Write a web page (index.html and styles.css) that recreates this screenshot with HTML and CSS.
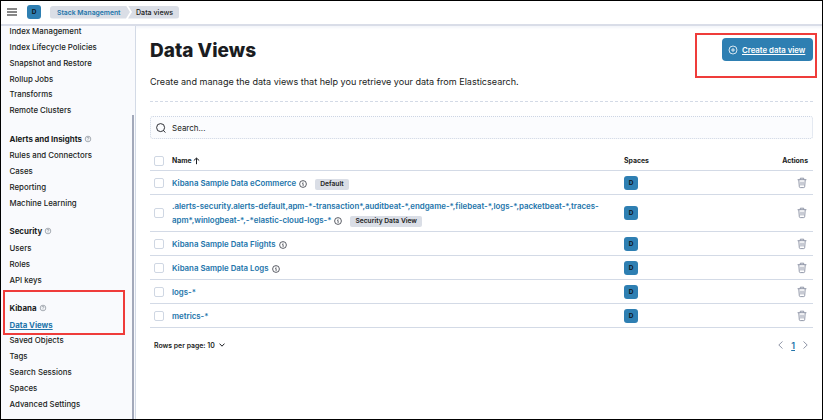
FILE: index.html
```html
<!DOCTYPE html>
<html lang="en">
<head>
<meta charset="utf-8">
<title>Data Views</title>
<link rel="stylesheet" href="styles.css">
</head>
<body>
<svg class="defs" aria-hidden="true">
  <symbol id="help" viewBox="0 0 8 8"><circle cx="4" cy="4" r="2.8"/><path d="M3 3.3Q3.1 2.4 4 2.4T4.9 3.3L4 4.2V4.7M4 5.2V5.7"/></symbol>
  <symbol id="info" viewBox="0 0 8 8"><circle cx="4" cy="4" r="3.4"/><path d="M3.3 3.5H4.1V5.9M4 1.9V2.6"/></symbol>
  <symbol id="trash" viewBox="0 0 10 12"><path d="M.6 2.7H9.4M3.3 2.5V1.2H6.7V2.5M1.8 2.9L2.3 9.6Q2.4 10.6 3.3 10.6H6.7Q7.6 10.6 7.7 9.6L8.2 2.9M4 4.7V8.5M6 4.7V8.5"/></symbol>
</svg>
<div class="app">
  <header class="topbar">
    <svg class="menu" viewBox="0 0 10 8"><path d="M0 1H10M0 4H10M0 7H10"/></svg>
    <span class="avatar top">D</span>
    <nav class="crumbs"><a class="crumb first">Stack Management</a><span class="crumb last">Data views</span></nav>
  </header>
  <div class="body">
    <aside class="side">
      <ul class="list">
        <li>Index Management</li><li>Index Lifecycle Policies</li><li>Snapshot and Restore</li><li>Rollup Jobs</li><li>Transforms</li><li>Remote Clusters</li>
      </ul>
      <h2>Alerts and Insights<svg><use href="#help"/></svg></h2>
      <ul class="list">
        <li>Rules and Connectors</li><li>Cases</li><li>Reporting</li><li>Machine Learning</li>
      </ul>
      <h2>Security<svg><use href="#help"/></svg></h2>
      <ul class="list">
        <li>Users</li><li>Roles</li><li>API keys</li>
      </ul>
      <h2>Kibana<svg><use href="#help"/></svg></h2>
      <ul class="list">
        <li><a class="active">Data Views</a></li><li>Saved Objects</li><li>Tags</li><li>Search Sessions</li><li>Spaces</li><li>Advanced Settings</li>
      </ul>
      <div class="thumb"></div>
      <div class="mark mark-side"></div>
    </aside>
    <main class="main">
      <div class="title">
        <h1>Data Views</h1>
        <button class="create"><svg viewBox="0 0 10 10"><circle cx="5" cy="5" r="4"/><path d="M5 3V7M3 5H7"/></svg><span>Create data view</span></button>
        <div class="mark mark-create"></div>
      </div>
      <p class="desc">Create and manage the data views that help you retrieve your data from Elasticsearch.</p>
      <div class="search"><svg viewBox="0 0 10 10"><circle cx="4.6" cy="4.6" r="4"/><path d="M7.4 7.5L9.5 9.6"/></svg><span>Search...</span></div>
      <div class="table">
        <div class="row head"><i class="check"></i><span>Name <svg class="sort" viewBox="0 0 7 8"><path d="M3.5 7.2V1.2M.8 3.5L3.5 1.1L6.2 3.5"/></svg></span><span>Spaces</span><span class="act">Actions</span></div>
        <div class="row"><i class="check"></i><div class="name"><a>Kibana Sample Data eCommerce</a><svg class="info"><use href="#info"/></svg><b class="badge">Default</b></div><span class="avatar">D</span><svg class="trash"><use href="#trash"/></svg></div>
        <div class="row tall"><i class="check"></i><div class="name"><a class="patterns">.alerts-security.alerts-default,apm-*-transaction*,auditbeat-*,endgame-*,filebeat-*,logs-*,packetbeat-*,traces-<br>apm*,winlogbeat-*,-*elastic-cloud-logs-*</a><svg class="info"><use href="#info"/></svg><b class="badge">Security Data View</b></div><span class="avatar">D</span><svg class="trash"><use href="#trash"/></svg></div>
        <div class="row"><i class="check"></i><div class="name"><a>Kibana Sample Data Flights</a><svg class="info"><use href="#info"/></svg></div><span class="avatar">D</span><svg class="trash"><use href="#trash"/></svg></div>
        <div class="row"><i class="check"></i><div class="name"><a>Kibana Sample Data Logs</a><svg class="info"><use href="#info"/></svg></div><span class="avatar">D</span><svg class="trash"><use href="#trash"/></svg></div>
        <div class="row"><i class="check"></i><div class="name"><a>logs-*</a></div><span class="avatar">D</span><svg class="trash"><use href="#trash"/></svg></div>
        <div class="row"><i class="check"></i><div class="name"><a>metrics-*</a></div><span class="avatar">D</span><svg class="trash"><use href="#trash"/></svg></div>
      </div>
      <footer class="foot">
        <span class="per">Rows per page: 10 <svg viewBox="0 0 6 4"><path d="M.5 .6L3 3.2L5.5 .6"/></svg></span>
        <span class="pager"><svg viewBox="0 0 5 8"><path d="M4.5 .5L.8 4L4.5 7.5"/></svg><a>1</a><svg viewBox="0 0 5 8"><path d="M.5 .5L4.2 4L.5 7.5"/></svg></span>
      </footer>
    </main>
  </div>
</div>
</body>
</html>
```
FILE: styles.css
```css
* { box-sizing: border-box; }
body { margin: 0; font-family: Inter, "Liberation Sans", sans-serif; font-size: 8px; color: #1a1c21; background: #fff; }
svg { fill: none; stroke: currentColor; stroke-width: 1; flex: none; }
.defs { position: absolute; width: 0; height: 0; }
.app { width: 823px; height: 420px; border: 1px solid #000; overflow: hidden; display: flex; flex-direction: column; }
.topbar { height: 25px; flex: none; border-bottom: 2px solid #d9dde8; display: flex; align-items: center; padding: 0 0 1px 6px; }
.menu { width: 10px; height: 8px; stroke: #111; stroke-width: 1.2; }
.avatar { width: 14px; height: 14px; border-radius: 3px; background: #2e7fb2; color: #10151c; font-size: 6.5px; font-weight: 700; line-height: 14px; text-align: center; display: block; }
.avatar.top { margin-left: 10px; }
.crumbs { display: flex; margin-left: 9px; font-size: 7.1px; font-weight: 500; line-height: 13px; height: 13px; }
.crumb { background: #dadee6; white-space: nowrap; }
.crumb.first { width: 80px; padding-left: 7px; color: #2274aa; font-weight: 600; font-size: 6.8px; border-radius: 3px 0 0 3px; clip-path: polygon(0 0, 76px 0, 80px 50%, 76px 100%, 0 100%); }
.crumb.last { width: 51px; margin-left: -2px; padding-left: 8px; border-radius: 0 3px 3px 0; clip-path: polygon(0 0, 100% 0, 100% 100%, 0 100%, 4px 50%); }
.body { flex: 1; min-height: 0; display: flex; }
.side { position: relative; width: 135px; flex: none; background: #f9fafd; border-right: 1px solid #d3dae6; padding-left: 8.5px; font-size: 7.85px; font-weight: 500; }
.list { list-style: none; margin: 0; padding: 0; line-height: 15.85px; }
.side > .list:first-child { margin-top: -2px; }
.side h2 { height: 24px; margin: 7.8px 0 -2.6px; font-size: 7.9px; line-height: 24px; font-weight: 700; display: flex; align-items: center; gap: 2px; }
.side h2 svg { width: 8px; height: 8px; stroke: #828994; stroke-width: .7; }
.active { color: #2274aa; font-weight: 700; text-decoration: underline; }
.thumb { position: absolute; right: 1px; top: 89px; bottom: 0; width: 2px; background: #a3a9ba; }
.mark { position: absolute; border: 2px solid #ef3c3a; }
.mark-side { left: 2px; top: 264px; width: 122px; height: 45px; }
.main { flex: 1; min-width: 0; padding: 0 9px 0 14px; box-shadow: inset 0 4px 3px -2px #f3f5fa; }
.title { position: relative; height: 48px; display: flex; justify-content: space-between; }
h1 { margin: 11px 0 0; font-size: 19px; line-height: 28px; font-weight: 800; }
.create { margin: 12px 0 0; width: 91px; height: 23px; border: 0; border-radius: 4px; padding: 0 0 0 6px; background: #2e7fb2; color: #fff; font: 600 7.8px Inter, sans-serif; display: flex; align-items: center; gap: 4px; text-decoration: underline; white-space: nowrap; }
.create svg { width: 10px; height: 10px; stroke-width: .8; }
.mark-create { right: -4px; top: 7px; width: 122px; height: 45px; }
.desc { margin: 0; height: 28px; border-bottom: 1px dashed #d3dae6; line-height: 16px; font-size: 9.06px; white-space: nowrap; }
.search { margin-top: 14px; height: 23px; border: 1px dotted #cdd5e3; border-radius: 3px; background: #fbfcfe; display: flex; align-items: center; padding-left: 5px; gap: 6px; }
.search svg { width: 10px; height: 10px; stroke-width: .9; }
.table { margin-top: 12px; }
.row { height: 24px; border-bottom: 1px solid #d3dae6; display: grid; grid-template-columns: 18px 452px 1fr 10px; padding: 0 6px 0 4px; align-items: center; }
.row.head { height: 20px; grid-template-columns: 18px 452px 1fr auto; padding-right: 5px; font-size: 6.9px; font-weight: 700; }
.row.tall { height: 37px; }
.check { width: 10px; height: 10px; border: 1px solid #cfd7e3; border-radius: 2px; background: #fff; }
.sort { width: 7px; height: 8px; vertical-align: -1.5px; }
.name { white-space: nowrap; color: #2274aa; font-size: 7.85px; font-weight: 600; line-height: 14px; }
.patterns { font-size: 7.9px; }
.info { width: 8px; height: 8px; margin-left: 3px; vertical-align: -2px; stroke: #343741; stroke-width: .8; }
.badge { display: inline-block; margin-left: 8px; padding: 0 5px; height: 11px; line-height: 11px; border-radius: 2px; background: #dadee6; color: #1a1c21; font-size: 6.7px; font-weight: 600; }
.trash { width: 10px; height: 12px; stroke: #858b9e; stroke-width: .9; }
.foot { margin-top: 9px; height: 16px; display: flex; justify-content: space-between; align-items: center; padding: 0 5px 0 4px; font-size: 6.9px; font-weight: 600; }
.per svg { width: 6px; height: 4px; margin-left: 2px; vertical-align: 1px; }
.pager { display: flex; align-items: center; gap: 8px; color: #858b9e; }
.pager svg { width: 5px; height: 8px; stroke-width: .9; }
.pager a { color: #2274aa; font-size: 9px; font-weight: 600; text-decoration: underline; }
```
